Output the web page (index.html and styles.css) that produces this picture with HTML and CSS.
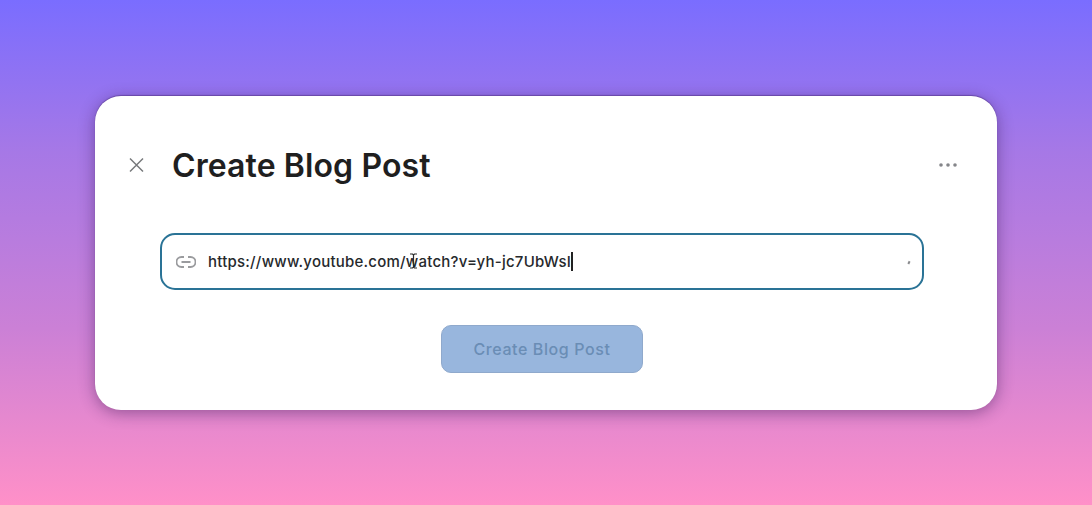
FILE: index.html
```html
<!DOCTYPE html>
<html lang="en">
<head>
    <meta charset="UTF-8">
    <title>Create Blog Post</title>
    <link rel="stylesheet" href="styles.css">
</head>
<body>
    <div class="card">
        <div class="header">
            <svg class="close-icon" width="16" height="16" viewBox="0 0 16 16">
                <path d="M2 1.500L15 14.500M15 1.500L2 14.500" />
            </svg>
            <h1 class="title">Create Blog Post</h1>
            <svg class="more-icon" width="18" height="4" viewBox="0 0 18 4">
                <circle cx="2" cy="2" r="1.800" />
                <circle cx="9" cy="2" r="1.800" />
                <circle cx="16" cy="2" r="1.800" />
            </svg>
        </div>
        <div class="url-field">
            <svg class="link-icon" width="20" height="12" viewBox="0 0 20 12">
                <path d="M8 1H5.500a5 5 0 0 0 0 10H8M12 1h2.500a5 5 0 0 1 0 10H12M5.500 6h9" />
            </svg>
            <span class="url-text">https://www.youtube.com/watch?v=yh-jc7UbWsI</span>
            <span class="caret"></span>
            <span class="resize-mark"></span>
            <svg class="ibeam" width="9" height="16" viewBox="0 0 9 16">
                <path d="M1 1h2.500l1 1 1-1H8M4.500 2v12M1 15h2.500l1-1 1 1H8" />
            </svg>
        </div>
        <button class="submit-button">Create Blog Post</button>
    </div>
</body>
</html>
```

FILE: styles.css
```css
body {
    margin: 0;
    height: 505px;
    overflow: hidden;
    display: flex;
    align-items: flex-start;
    justify-content: center;
    background: linear-gradient(180deg, #7a6dff 0%, #a678e6 30%, #cb80d6 65%, #ff90c8 100%);
    font-family: "Inter", "Liberation Sans", sans-serif;
    color: #1f1f1f;
}
.card {
    box-sizing: border-box;
    width: 902px;
    height: 314px;
    margin-top: 96px;
    padding: 50px 40px 0 33px;
    background: white;
    border-radius: 26px;
    box-shadow: 0 3px 16px rgba(50, 20, 80, 0.45), 0 -1px 1px rgba(50, 20, 80, 0.35);
}
.header {
    display: flex;
    align-items: center;
    height: 38px;
}
.close-icon {
    margin-right: 28px;
    stroke: #77797c;
    stroke-width: 1.500;
    fill: none;
}
.title {
    flex: 1;
    margin: 0;
    font-size: 32px;
    font-weight: 600;
    letter-spacing: 0.1px;
}
.more-icon {
    fill: #85868a;
}
.url-field {
    position: relative;
    box-sizing: border-box;
    display: flex;
    align-items: center;
    width: 764px;
    height: 57px;
    margin: 49px 0 0 32px;
    padding: 0 14px;
    border: 2px solid #2a7396;
    border-radius: 15px;
}
.link-icon {
    margin-right: 12px;
    stroke: #9a9b9e;
    stroke-width: 1.800;
    fill: none;
}
.url-text {
    font-size: 15px;
    font-weight: 500;
    letter-spacing: 0.23px;
    color: #26292c;
}
.caret {
    width: 1.500px;
    height: 19px;
    background: #222;
}
.resize-mark {
    position: absolute;
    right: 13px;
    top: 26px;
    width: 1.500px;
    height: 3px;
    background: #8a8b8e;
    transform: rotate(25deg);
}
.ibeam {
    position: absolute;
    left: 247px;
    top: 18px;
    stroke: #2b2b2b;
    stroke-width: 1.200;
    fill: none;
}
.submit-button {
    display: block;
    width: 202px;
    height: 48px;
    margin: 35px 0 0 313px;
    background: #98b6dd;
    border: 1px solid #8fa9cc;
    border-radius: 10px;
    font-family: inherit;
    font-size: 16px;
    font-weight: 500;
    letter-spacing: 0.6px;
    color: #6a8db5;
}
```
